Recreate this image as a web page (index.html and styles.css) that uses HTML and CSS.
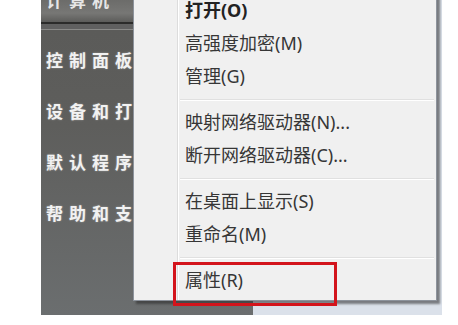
FILE: index.html
```html
<!DOCTYPE html>
<html lang="zh-CN">

<head>
  <meta charset="UTF-8">
  <meta name="viewport" content="width=device-width, initial-scale=1.0">
  <title>属性菜单</title>
  <link rel="stylesheet" href="styles.css">
</head>

<body>

  <div class="screen">

    <div class="start">
      <div class="start-left">
        <div class="head">计算机</div>
        <ul class="links">
          <li>控制面板</li>
          <li>设备和打印机</li>
          <li>默认程序</li>
          <li>帮助和支持</li>
        </ul>
      </div>
      <div class="start-right"></div>
    </div>

    <!-- context menu over the start menu -->
    <div class="menu">
      <div class="item bold">打开(O)</div>
      <div class="item">高强度加密(M)</div>
      <div class="item">管理(G)</div>
      <div class="sep"></div>
      <div class="item">映射网络驱动器(N)...</div>
      <div class="item">断开网络驱动器(C)...</div>
      <div class="sep"></div>
      <div class="item">在桌面上显示(S)</div>
      <div class="item">重命名(M)</div>
      <div class="sep"></div>
      <div class="item">属性(R)</div>
    </div>

    <div class="mark"></div>

  </div>

</body>

</html>
```

FILE: styles.css
```css
body {
  margin: 0;
  background-color: white;
  font-family: "Noto Sans", "Noto Sans CJK SC", sans-serif;
}

.screen {
  position: relative;
  width: 458px;
  height: 325px;
  overflow: hidden;
}

/* start menu behind */
.start {
  display: flex;
  margin-left: 41px;
  width: 401px;
  height: 315px;
}

.start-left {
  width: 212px;
  background: linear-gradient(#5a5a58, #5e5e5c 40%, #6b6e6f);
  overflow: hidden;
}

.start-right {
  flex: 1;
  background-color: #dbe1ea;
}

.head {
  height: 22px;
  padding-left: 5px;
  line-height: 0;
  color: #e6e6e6;
  font-family: "Noto Sans CJK SC", sans-serif;
  font-weight: 700;
  font-size: 17px;
  letter-spacing: 6px;
  background: linear-gradient(#6c6c6a, #777775 60%, #5c5c5a);
  border-bottom: 2px solid #2b2b2a;
  box-shadow: 0 5px 0 #606060, 0 6px 0 #8a8a88;
}

.links {
  list-style: none;
  margin: 0;
  padding: 24px 0 0 5px;
}

.links li {
  height: 51px;
  line-height: 24px;
  color: #f2f2f2;
  font-family: "Noto Sans CJK SC", sans-serif;
  font-weight: 700;
  font-size: 17px;
  letter-spacing: 6px;
  white-space: nowrap;
  text-shadow: 0 0 2px rgba(255, 255, 255, .4);
}

/* context menu */
.menu {
  position: absolute;
  left: 133px;
  top: -10px;
  width: 302px;
  padding: 3px 0;
  background-color: #f0f0f0;
  border: 1px solid #8d939c;
  box-shadow: 3px 3px 2px rgba(40, 40, 40, .55);
  background-image: linear-gradient(90deg, transparent 43px, #dcdcdc 43px, #dcdcdc 44px, #fff 44px, #fff 45px, transparent 45px);
}

.item {
  height: 33px;
  line-height: 33px;
  padding-left: 51px;
  font-size: 18px;
  color: #363636;
  white-space: nowrap;
}

.item.bold {
  font-weight: 700;
  color: #222;
}

.sep {
  height: 13px;
  margin-left: 46px;
  margin-right: 2px;
  background: linear-gradient(transparent 6px, #e0e0e0 6px, #e0e0e0 7px, #fff 7px, #fff 8px, transparent 8px);
}

/* red highlight round the last item */
.mark {
  position: absolute;
  left: 173px;
  top: 262px;
  width: 158px;
  height: 38px;
  border: 3px solid #d3141c;
}
```
